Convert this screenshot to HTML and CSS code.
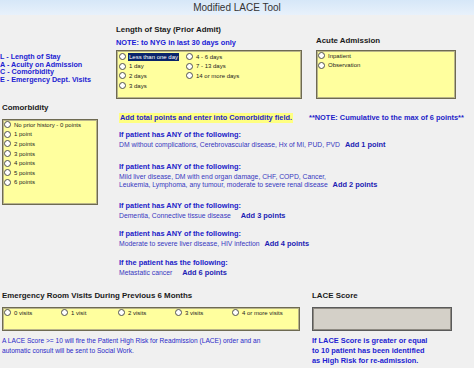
FILE: index.html
```html
<!DOCTYPE html>
<html lang="en">
  <head>
    <meta charset="UTF-8" />
    <title>Modified LACE Tool</title>
    <link rel="stylesheet" href="styles.css">
  </head>
  <body>
    <div class="titlebar">Modified LACE Tool</div>

    <!-- 上部：图例 / 住院天数 / 入院类型 -->
    <div class="top">
      <div class="legend">
        <div>L - Length of Stay</div>
        <div>A - Acuity on Admission</div>
        <div>C - Comorbidity</div>
        <div>E - Emergency Dept. Visits</div>
      </div>
      <div class="los">
        <div class="label">Length of Stay (Prior Admit)</div>
        <div class="note">NOTE: to NYG in last 30 days only</div>
        <div class="box yellow los-box">
          <div class="col">
            <div class="opt"><span class="radio"></span><span class="sel">Less than one day</span></div>
            <div class="opt"><span class="radio"></span>1 day</div>
            <div class="opt"><span class="radio"></span>2 days</div>
            <div class="opt"><span class="radio"></span>3 days</div>
          </div>
          <div class="col">
            <div class="opt"><span class="radio"></span>4 - 6 days</div>
            <div class="opt"><span class="radio"></span>7 - 13 days</div>
            <div class="opt"><span class="radio"></span>14 or more days</div>
          </div>
        </div>
      </div>
      <div class="acute">
        <div class="label">Acute Admission</div>
        <div class="box yellow acute-box">
          <div class="opt"><span class="radio"></span>Inpatient</div>
          <div class="opt"><span class="radio"></span>Observation</div>
        </div>
      </div>
    </div>

    <!-- 中部：合并症 -->
    <div class="mid">
      <div class="comor">
        <div class="label">Comorbidity</div>
        <div class="box yellow comor-box">
          <div class="opt"><span class="radio"></span>No prior history - 0 points</div>
          <div class="opt"><span class="radio"></span>1 point</div>
          <div class="opt"><span class="radio"></span>2 points</div>
          <div class="opt"><span class="radio"></span>3 points</div>
          <div class="opt"><span class="radio"></span>4 points</div>
          <div class="opt"><span class="radio"></span>5 points</div>
          <div class="opt"><span class="radio"></span>6 points</div>
        </div>
      </div>
      <div class="info">
        <div class="addrow">
          <span class="hl">Add total points and enter into Comorbidity field.</span>
          <span class="cum">**NOTE: Cumulative to the max of 6 points**</span>
        </div>
        <div class="block b1">
          <div class="q">If patient has ANY of the following:</div>
          <div class="d">DM without complications, Cerebrovascular disease, Hx of MI, PUD, PVD <b>Add 1 point</b></div>
        </div>
        <div class="block b2">
          <div class="q">If patient has ANY of the following:</div>
          <div class="d">Mild liver disease, DM with end organ damage, CHF, COPD, Cancer,<br>Leukemia, Lymphoma, any tumour, moderate to severe renal disease <b>Add 2 points</b></div>
        </div>
        <div class="block b3">
          <div class="q">If patient has ANY of the following:</div>
          <div class="d">Dementia, Connective tissue disease <b class="wide">Add 3 points</b></div>
        </div>
        <div class="block b4">
          <div class="q">If patient has ANY of the following:</div>
          <div class="d">Moderate to severe liver disease, HIV infection <b>Add 4 points</b></div>
        </div>
        <div class="block b5">
          <div class="q">If the patient has the following:</div>
          <div class="d">Metastatic cancer <b class="wide">Add 6 points</b></div>
        </div>
      </div>
    </div>

    <!-- 底部：急诊次数 / 分数 -->
    <div class="bottom">
      <div class="er">
        <div class="label">Emergency Room Visits During Previous 6 Months</div>
        <div class="box yellow er-box">
          <div class="opt"><span class="radio"></span>0 visits</div>
          <div class="opt"><span class="radio"></span>1 visit</div>
          <div class="opt"><span class="radio"></span>2 visits</div>
          <div class="opt"><span class="radio"></span>3 visits</div>
          <div class="opt"><span class="radio"></span>4 or more visits</div>
        </div>
        <div class="foot">A LACE Score &gt;= 10 will fire the Patient High Risk for Readmission (LACE) order and an<br>automatic consult will be sent to Social Work.</div>
      </div>
      <div class="lace">
        <div class="label">LACE Score</div>
        <div class="box score-box"></div>
        <div class="risk">If LACE Score is greater or equal<br>to 10 patient has been identified<br>as High Risk for re-admission.</div>
      </div>
    </div>
  </body>
</html>
```

FILE: styles.css
```css
* {
  box-sizing: border-box;
}

body {
  margin: 0;
  width: 474px;
  height: 368px;
  overflow: hidden;
  background: #f0f0f0;
  font-family: "Liberation Sans", Arial, sans-serif;
  color: #111;
}

.titlebar {
  height: 15px;
  line-height: 15px;
  text-align: center;
  font-size: 10px;
  color: #333;
  background: linear-gradient(#d6e7f8, #e8f1fb);
}

.label {
  font-size: 7.9px;
  font-weight: bold;
  line-height: 10px;
  color: #1a1a1a;
  white-space: nowrap;
}

.box {
  border: 1px solid #6e6a52;
  box-shadow: inset 0 0 0 1px #b9b58a;
}

.yellow {
  background: #ffff9e;
}

.opt {
  display: flex;
  align-items: center;
  height: 9.6px;
  font-size: 6px;
  color: #222;
  white-space: nowrap;
}

.radio {
  flex: none;
  width: 7px;
  height: 7px;
  margin-right: 3px;
  border: 1px solid #505050;
  border-radius: 50%;
  background: #fff;
}

.sel {
  background: #0a246a;
  color: #fff;
  padding: 0 1px;
  line-height: 8px;
  margin-left: -1px;
}

/* 上部 */
.top {
  display: flex;
  align-items: flex-end;
}

.legend {
  width: 116px;
  align-self: flex-start;
  margin-top: 38px;
  font-size: 7.2px;
  font-weight: bold;
  line-height: 7.7px;
  color: #1c1cd2;
  white-space: nowrap;
}

.los {
  width: 186px;
}

.los .label {
  margin-top: 10px;
}

.note {
  margin-top: 3px;
  font-size: 7.4px;
  font-weight: bold;
  line-height: 10px;
  color: #1a1ad6;
  white-space: nowrap;
}

.los-box {
  display: flex;
  height: 49px;
  margin-top: 2px;
  padding: 1px 0 0 2px;
}

.los-box .col:first-child {
  width: 67px;
}

.acute {
  width: 140px;
  margin-left: 14px;
}

.acute .label {
  margin-bottom: 4px;
}

.acute-box {
  height: 49px;
  padding: 0 0 0 1px;
}

/* 中部 */
.mid {
  display: flex;
}

.comor {
  width: 96px;
  margin-left: 2px;
}

.comor .label {
  margin-top: 4px;
}

.comor-box {
  height: 86px;
  margin-top: 6px;
  padding: 0 0 0 1px;
}

.info {
  margin-left: 21px;
  padding-top: 14px;
}

.addrow {
  display: flex;
  font-size: 7.4px;
  font-weight: bold;
  line-height: 10px;
  color: #1e1ec8;
  white-space: nowrap;
}

.hl {
  background: #ffff80;
  padding: 0 1px;
}

.cum {
  margin-left: 16px;
}

.q {
  font-size: 7.4px;
  font-weight: bold;
  line-height: 10px;
  color: #2222c8;
  white-space: nowrap;
}

.d {
  margin-top: 1px;
  font-size: 6.8px;
  line-height: 8.5px;
  color: #3838c0;
  white-space: nowrap;
}

.d b {
  margin-left: 3px;
  font-size: 7.4px;
  color: #1c1cb4;
}

.d b.wide {
  margin-left: 8px;
}

.b1 { margin-top: 7px; }
.b2 { margin-top: 12px; }
.b3 { margin-top: 11px; }
.b4 { margin-top: 9px; }
.b5 { margin-top: 9px; }

/* 底部 */
.bottom {
  display: flex;
  margin-top: 14px;
}

.er {
  width: 298px;
  margin-left: 2px;
}

.er-box {
  display: flex;
  height: 24px;
  margin-top: 6px;
  padding: 0 0 0 1px;
}

.er-box .opt {
  width: 57px;
}

.foot {
  margin-top: 5px;
  font-size: 6.6px;
  line-height: 10px;
  color: #2a2ac8;
  white-space: nowrap;
}

.lace {
  width: 140px;
  margin-left: 12px;
}

.score-box {
  height: 24px;
  margin-top: 6px;
  background: #d4d0c8;
  border-color: #5a5a5a;
  box-shadow: inset 0 0 0 1px #8e8a82;
}

.risk {
  margin-top: 5px;
  font-size: 7.4px;
  font-weight: bold;
  line-height: 10px;
  color: #1c1cd2;
  white-space: nowrap;
}
```
